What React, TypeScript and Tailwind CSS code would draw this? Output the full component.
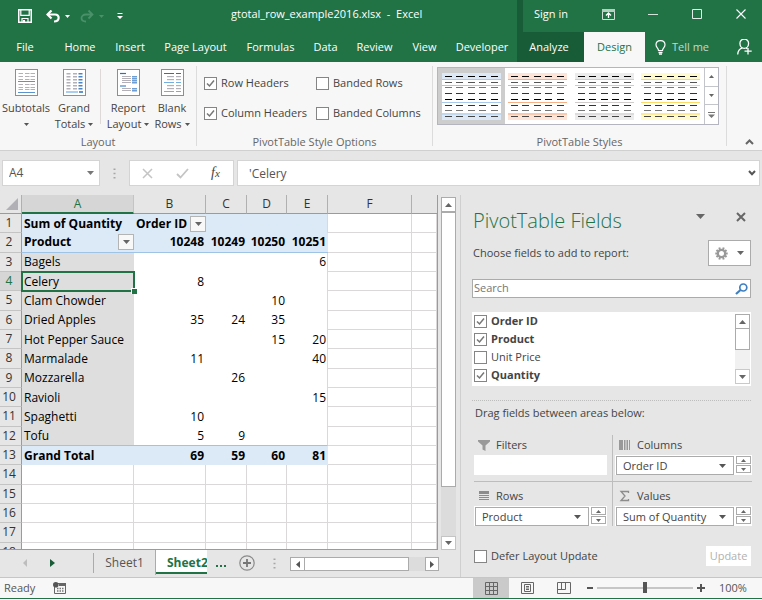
import React from "react";
import clsx from "clsx";

const UI = "font-['Open_Sans','Noto_Sans',sans-serif]";

function Caret({ className = "text-[#666]", up = false }: { className?: string; up?: boolean }) {
  return (
    <svg width="7" height="4" viewBox="0 0 7 4" className={clsx("pointer-events-none shrink-0", className)} aria-hidden="true">
      <path d={up ? "M0 4L3.500 0L7 4Z" : "M0 0H7L3.500 4Z"} fill="currentColor" />
    </svg>
  );
}

function Check({ label, checked = false, bold = false, className = "" }: { label: string; checked?: boolean; bold?: boolean; className?: string }) {
  return (
    <label className={clsx("flex items-center gap-[4px] whitespace-nowrap", bold && "font-bold", className)}>
      <span className="grid size-[13px] shrink-0">
        <input
          type="checkbox"
          defaultChecked={checked}
          className="peer col-start-1 row-start-1 size-[13px] appearance-none border border-[#858585] bg-white"
        />
        <svg viewBox="0 0 13 13" className="pointer-events-none invisible col-start-1 row-start-1 size-[13px] peer-checked:visible" aria-hidden="true">
          <path d="M3 6.500L5.500 9L10 3.500" fill="none" stroke="#777" strokeWidth="1.500" />
        </svg>
      </span>
      {label}
    </label>
  );
}

/* ---------- title bar ---------- */

function TitleBar() {
  return (
    <div className="flex h-[32px] shrink-0 items-center bg-[#217346] text-[11px] text-white">
      <div className="flex w-[231px] shrink-0 items-center pl-[18px]">
        <button aria-label="Save">
          <svg width="14" height="14" viewBox="0 0 14 14" className="block">
            <path d="M.750 .750H13.250V13.250H.750Z" fill="none" stroke="#fff" strokeWidth="1.500" />
            <path d="M2.800 1V6.300H11.200V1M4 13V9.500H10V13" fill="none" stroke="#fff" strokeWidth="1.200" />
            <path d="M5 11H7V13H5Z" fill="#fff" />
          </svg>
        </button>
        <button aria-label="Undo" className="ml-[14px]">
          <svg width="14" height="13" viewBox="0 0 14 13" className="block">
            <path d="M1.500 4.500H9C14 4.500 14 11.500 8 11.500" fill="none" stroke="#fff" strokeWidth="2.200" />
            <path d="M5.500 .5L1.500 4.500L5.500 8.500" fill="none" stroke="#fff" strokeWidth="2.200" />
          </svg>
        </button>
        <button aria-label="Undo history" className="ml-[5px]">
          <svg width="5" height="3" viewBox="0 0 5 3" className="block"><path d="M0 0H5L2.500 3Z" fill="#fff" /></svg>
        </button>
        <button aria-label="Redo" className="ml-[10px]">
          <svg width="14" height="13" viewBox="0 0 14 13" className="block">
            <path d="M12.500 4.500H6C0 4.500 0 11.500 6 11.500M8.500 .5L12.500 4.500L8.500 8.500" fill="none" stroke="#4a9069" strokeWidth="1.800" />
          </svg>
        </button>
        <button aria-label="Redo history" className="ml-[5px]">
          <svg width="5" height="3" viewBox="0 0 5 3" className="block"><path d="M0 0H5L2.500 3Z" fill="#4a9069" /></svg>
        </button>
        <button aria-label="Customize toolbar" className="ml-[13px]">
          <svg width="6" height="6" viewBox="0 0 6 6" className="block"><path d="M.5 0H5.500V1H.5ZM0 3H6L3 6Z" fill="#fff" /></svg>
        </button>
      </div>
      <h1 className="flex-1 truncate pb-[3px]">gtotal_row_example2016.xlsx&nbsp; -&nbsp; Excel</h1>
      <div className="h-full w-[6px] bg-[#185c37]" />
      <div className="flex h-full w-[239px] shrink-0 items-center pb-[4px] pl-[10px]">
        <button className="w-[36px] whitespace-nowrap">Sign in</button>
        <button aria-label="Ribbon display options" className="ml-[33px]">
          <svg width="13" height="11" viewBox="0 0 13 11" className="block">
            <path d="M.5 .5H12.500V10.500H.5Z" fill="none" stroke="#cfe0d6" />
            <path d="M0 0H13V3H0Z" fill="#b5cfc0" />
            <path d="M6.500 9V4.500M4 6.500L6.500 4L9 6.500" fill="none" stroke="#fff" strokeWidth="1.300" />
          </svg>
        </button>
        <button aria-label="Minimize" className="ml-[33px]">
          <svg width="10" height="10" viewBox="0 0 10 10" className="block"><path d="M0 5.500H10" stroke="#d3e3da" /></svg>
        </button>
        <button aria-label="Maximize" className="ml-[34px]">
          <svg width="10" height="10" viewBox="0 0 10 10" className="block"><path d="M.5 .5H9.500V9.500H.5Z" fill="none" stroke="#e3eee8" /></svg>
        </button>
        <button aria-label="Close" className="ml-[34px]">
          <svg width="10" height="10" viewBox="0 0 10 10" className="block"><path d="M.5 .5L9.500 9.500M9.500 .5L.5 9.500" stroke="#fff" strokeWidth="1.100" /></svg>
        </button>
      </div>
    </div>
  );
}

const TABS: [string, string][] = [
  ["File", "w-[54px] pr-[4px]"],
  ["Home", "w-[52px]"],
  ["Insert", "w-[48px]"],
  ["Page Layout", "w-[83px]"],
  ["Formulas", "w-[67px]"],
  ["Data", "w-[43px]"],
  ["Review", "w-[55px]"],
  ["View", "w-[45px]"],
  ["Developer", "w-[70px]"],
  ["Analyze", "w-[67px] bg-[#185c37] pr-[3px]"],
  ["Design", "w-[61px] bg-[#f7f7f7] text-[#217346]"],
];

function Tabs() {
  return (
    <nav className="flex h-[30px] shrink-0 bg-[#217346] text-[11px] text-white">
      {TABS.map(([name, cls]) => (
        <button key={name} className={clsx("shrink-0 whitespace-nowrap text-center", cls)}>{name}</button>
      ))}
      <button className="ml-[10px] flex items-center gap-[6px] whitespace-nowrap text-[#c3d9cd]">
        <svg width="11" height="15" viewBox="0 0 11 15" aria-hidden="true">
          <path d="M3.500 10.500C3.500 8 1 7.500 1 4.800C1 2.300 3 .7 5.500 .7S10 2.300 10 4.800C10 7.500 7.500 8 7.500 10.500Z" fill="none" stroke="#fff" strokeWidth="1.200" />
          <path d="M3.500 12.500H7.500M4 14.200H7" stroke="#fff" strokeWidth="1.300" />
        </svg>
        Tell me
      </button>
      <button aria-label="Share" className="ml-auto mr-[10px]">
        <svg width="15" height="16" viewBox="0 0 15 16" className="block">
          <path d="M11.500 5A4.300 4.300 0 1 0 3 5C3 7.500 5 9.300 7.200 9.300S11.500 7.500 11.500 5Z" fill="none" stroke="#fff" strokeWidth="1.300" />
          <path d="M.7 15.500C.9 12 2.500 9.500 5.500 8.800M9 9L10 9.800M11 9V15.500M7.500 12.200H14.700" fill="none" stroke="#fff" strokeWidth="1.300" />
        </svg>
      </button>
    </nav>
  );
}

/* ---------- ribbon ---------- */

function Sheet({ kind }: { kind: "sub" | "grand" | "report" | "blank" }) {
  const rows = [4, 7, 10, 15, 18, 20];
  const grandRows = [4, 7, 10, 13, 16, 19];
  const cols = [3.5, 10, 15.5];
  const gray = "#b4b0b8";
  return (
    <svg width="23" height="27" viewBox="0 0 23 27" className="block" aria-hidden="true">
      <rect x=".5" y=".5" width="22" height="26" fill="#fff" stroke="#968c86" />
      {kind === "sub" && (
        <>
          {rows.map((y) => cols.map((x) => <rect key={x + "-" + y} x={x} y={y} width="4.500" height="1" fill={gray} />))}
          <path d="M3 12.500H20M3 23.500H20" stroke="#5b93cc" />
        </>
      )}
      {kind === "grand" && (
        <>
          {grandRows.map((y) => cols.map((x, i) => <rect key={x + "-" + y} x={x} y={y} width="4" height="1.500" fill={i === 2 ? "#4a86c6" : gray} />))}
          <path d="M3 23H15" stroke="#73aee2" strokeWidth="1.200" />
          <path d="M16 23H20" stroke="#2e6fb8" strokeWidth="1.500" />
        </>
      )}
      {kind === "report" && (
        <>
          <path d="M3 4.500H9" stroke="#2e6fb8" strokeWidth="1.200" />
          <path d="M3 17H9" stroke="#8fb6df" strokeWidth="2" />
          {[7, 9, 11, 13, 19, 21].map((y) => (
            <g key={y}>
              <rect x="5" y={y} width="9" height="1" fill={gray} />
              <rect x="15" y={y} width="5" height="1.500" fill="#6d9dd2" />
            </g>
          ))}
        </>
      )}
      {kind === "blank" && (
        <>
          <path d="M3 4.500H13M15 4.500H20" stroke="#2e6fb8" strokeWidth="1.200" />
          {[7, 10, 16, 19].map((y) => (
            <g key={y}>
              <rect x="6" y={y} width="7" height="1.200" fill={gray} />
              <rect x="15" y={y} width="5" height="1.200" fill={gray} />
            </g>
          ))}
          <path d="M3 13.500H13M15 13.500H20M3 22.500H13M15 22.500H20" stroke="#73aee2" strokeWidth="1.200" />
        </>
      )}
    </svg>
  );
}

function RibbonButton({ kind, top, bottom, className }: { kind: "sub" | "grand" | "report" | "blank"; top: string; bottom?: string; className: string }) {
  return (
    <button className={clsx("flex shrink-0 flex-col items-center whitespace-nowrap leading-4", className)}>
      <Sheet kind={kind} />
      <span className="mt-[4px]">{top}</span>
      <span className="flex h-4 items-center gap-[3px]">
        {bottom}
        <svg width="5" height="3" viewBox="0 0 5 3" aria-hidden="true"><path d="M0 0H5L2.500 3Z" fill="#555" /></svg>
      </span>
    </button>
  );
}

function StyleThumb({ name, bg, line, selected = false }: { name: string; bg: string; line: string; selected?: boolean }) {
  const tones = ["#000", "#555", "#777", "#333", "#000", "#333", "#777", "#444"];
  return (
    <button aria-label={name} className={clsx("flex flex-1 items-center justify-center", selected && "bg-[#cdcdcd]")}>
      <svg width="59" height="47" viewBox="0 0 59 47" className="block">
        <rect width="59" height="47" fill="#fff" />
        <rect width="59" height="7" fill={bg} />
        <rect y="40" width="59" height="7" fill={bg} />
        <path d="M0 6.500H59M0 12.500H59M0 29.500H59M0 41H59" stroke={line} />
        {tones.map((tone, r) =>
          [3, 14, 26, 37, 49].map((x) => (
            <rect key={r + "-" + x} x={x} y={[3, 9, 14, 20, 26, 32, 37, 43][r]} width="7" height="1" fill={tone} />
          ))
        )}
      </svg>
    </button>
  );
}

function Group({ label, className, children }: { label: string; className?: string; children: React.ReactNode }) {
  return (
    <section className={clsx("my-1 flex shrink-0 flex-col border-r border-[#dcdcdc]", className)}>
      <div className="flex flex-1 items-start">{children}</div>
      <h2 className="h-[8px] text-center leading-[8px] text-[#666]">{label}</h2>
    </section>
  );
}

function Ribbon() {
  return (
    <div className="flex h-[89px] shrink-0 border-b border-[#d0d0d0] bg-[#f7f7f7] text-[11px] text-[#444]">
      <Group label="Layout" className="w-[197px]">
        <div className="flex pt-[3px]">
          <RibbonButton kind="sub" top="Subtotals" className="w-[52px]" />
          <RibbonButton kind="grand" top="Grand" bottom="Totals" className="w-[44px]" />
          <div className="mx-[4px] mb-[8px] w-px bg-[#dfd8d8]" />
          <RibbonButton kind="report" top="Report" bottom="Layout" className="w-[46px]" />
          <RibbonButton kind="blank" top="Blank" bottom="Rows" className="w-[42px]" />
        </div>
      </Group>
      <Group label="PivotTable Style Options" className="w-[236px]">
        <div className="grid h-[62px] grid-cols-[112px_auto] items-center pl-[7px] pt-[2px]">
          <Check label="Row Headers" checked />
          <Check label="Banded Rows" />
          <Check label="Column Headers" checked />
          <Check label="Banded Columns" />
        </div>
      </Group>
      <Group label="PivotTable Styles" className="w-[294px]">
        <div className="ml-[4px] mr-[7px] mt-px flex h-[58px] flex-1 border border-[#b5b5c0] bg-white">
          <StyleThumb name="Light blue style" bg="#dce8f5" line="#a9c9ea" selected />
          <StyleThumb name="Light orange style" bg="#fde4d6" line="#f6b088" />
          <StyleThumb name="Light gray style" bg="#ececec" line="#d0cccc" />
          <StyleThumb name="Light yellow style" bg="#fffbcc" line="#ffd966" />
          <div className="grid w-[14px] grid-rows-3 divide-y divide-[#c4c4cc] border-l border-[#c4c4cc]">
            <button aria-label="Previous styles" className="flex items-center justify-center">
              <svg width="5" height="3" viewBox="0 0 5 3"><path d="M0 3L2.500 0L5 3Z" fill="#666" /></svg>
            </button>
            <button aria-label="Next styles" className="flex items-center justify-center">
              <svg width="5" height="3" viewBox="0 0 5 3"><path d="M0 0H5L2.500 3Z" fill="#666" /></svg>
            </button>
            <button aria-label="All styles" className="flex items-center justify-center">
              <svg width="7" height="6" viewBox="0 0 7 6"><path d="M0 0H7V1H0ZM0 2.500H7L3.500 6Z" fill="#777" /></svg>
            </button>
          </div>
        </div>
      </Group>
      <button aria-label="Collapse ribbon" className="mb-[5px] ml-auto mr-[8px] self-end">
        <svg width="9" height="6" viewBox="0 0 9 6" className="block"><path d="M1 5L4.500 1.500L8 5" fill="none" stroke="#666" strokeWidth="2" /></svg>
      </button>
    </div>
  );
}

/* ---------- formula bar ---------- */

function Dots() {
  return (
    <svg width="3" height="11" viewBox="0 0 3 11" className="shrink-0" aria-hidden="true">
      <path d="M.5 .5H2.500V2H.5ZM.5 4.700H2.500V6.200H.5ZM.5 9H2.500V10.500H.5Z" fill="#a6a6a6" />
    </svg>
  );
}

function FormulaBar() {
  return (
    <div className="flex h-[44px] shrink-0 items-start bg-[#e6e6e6] px-[2px] pt-[9px] text-[12px] text-[#555]">
      <div className="grid w-[98px] shrink-0 items-center">
        <select aria-label="Name box" className="col-start-1 row-start-1 h-[26px] w-full appearance-none border border-[#d4d4d4] bg-white pl-[6px]">
          <option>A4</option>
        </select>
        <Caret className="col-start-1 row-start-1 mr-[6px] justify-self-end text-[#777]" />
      </div>
      <div className="flex h-[26px] w-[29px] shrink-0 items-center justify-center"><Dots /></div>
      <div className="flex h-[26px] w-[105px] shrink-0 items-center border border-[#d4d4d4] bg-white">
        <button aria-label="Cancel" className="ml-[12px]">
          <svg width="11" height="11" viewBox="0 0 11 11" className="block"><path d="M1 1L10 10M10 1L1 10" stroke="#c4c4c4" strokeWidth="1.500" /></svg>
        </button>
        <button aria-label="Enter" className="ml-[23px]">
          <svg width="13" height="11" viewBox="0 0 13 11" className="block"><path d="M1 6L4.500 9.500L12 1" fill="none" stroke="#c4c4c4" strokeWidth="1.800" /></svg>
        </button>
        <button aria-label="Insert function" className="ml-[22px] flex items-baseline font-['Liberation_Serif',serif] text-[14px] italic leading-none text-[#444]">
          f<span className="text-[11px]">x</span>
        </button>
      </div>
      <div className="ml-[3px] flex h-[26px] min-w-0 flex-1 items-center border border-[#d4d4d4] bg-white pr-[3px]">
        <input aria-label="Formula" defaultValue="'Celery" className="h-full min-w-0 flex-1 bg-transparent pl-[11px] text-[12px] outline-none" />
        <button aria-label="Expand formula bar">
          <svg width="8" height="6" viewBox="0 0 8 6" className="block"><path d="M1 1L4 4.200L7 1" fill="none" stroke="#555" strokeWidth="2" /></svg>
        </button>
      </div>
    </div>
  );
}

/* ---------- worksheet ---------- */

const DATA: [string, string, string, string, string][] = [
  ["Bagels", "", "", "", "6"],
  ["Celery", "8", "", "", ""],
  ["Clam Chowder", "", "", "10", ""],
  ["Dried Apples", "35", "24", "35", ""],
  ["Hot Pepper Sauce", "", "", "15", "20"],
  ["Marmalade", "11", "", "", "40"],
  ["Mozzarella", "", "26", "", ""],
  ["Ravioli", "", "", "", "15"],
  ["Spaghetti", "10", "", "", ""],
  ["Tofu", "5", "9", "", ""],
];

function RowHead({ n, active = false }: { n: number; active?: boolean }) {
  return (
    <th
      scope="row"
      className={clsx(
        "border-b border-r border-b-[#c4c4c4] border-r-[#9b9b9b] pr-[3px] text-center font-normal",
        active ? "bg-[#d6d6d6] text-[#217346]" : "bg-[#e6e6e6] text-[#333]"
      )}
    >
      {n}
    </th>
  );
}

function FilterButton({ label }: { label: string }) {
  return (
    <button aria-label={label} className="flex size-4 shrink-0 items-center justify-center border border-[#b4b4b4] bg-[#f8f8f8]">
      <Caret />
    </button>
  );
}

const LINE = "border-b border-r border-[#dad8d9]";

function Grid() {
  const head = "border-b border-r border-b-[#9b9b9b] border-r-[#b0b0b0] font-normal text-[#333]";
  return (
    <table className="h-[367px] w-full table-fixed border-separate border-spacing-0 whitespace-nowrap bg-white text-[12px] leading-[16px] text-black">
      <colgroup>
        <col className="w-[22px]" />
        <col className="w-[112px]" />
        <col className="w-[72px]" />
        <col className="w-[41px]" />
        <col className="w-[40px]" />
        <col className="w-[41px]" />
        <col className="w-[84px]" />
        <col />
      </colgroup>
      <thead>
        <tr className="h-[19px] bg-[#e6e6e6]">
          <th className={head} aria-label="Select all">
            <svg width="12" height="12" viewBox="0 0 12 12" className="ml-auto mr-[3px] block"><path d="M12 0V12H0Z" fill="#b1b1b5" /></svg>
          </th>
          <th className="border-b-2 border-r border-b-[#217346] border-r-[#c4c4c4] bg-[#d6d6d6] font-normal text-[#217346]">A</th>
          {["B", "C", "D", "E", "F"].map((c) => (
            <th key={c} className={head}>{c}</th>
          ))}
          <th className="border-b border-[#9b9b9b]" />
        </tr>
      </thead>
      <tbody>
        <tr className="h-[19px]">
          <RowHead n={1} />
          <td className="bg-[#dce9f6] pl-[2px] font-bold">Sum of Quantity</td>
          <td className="bg-[#dce9f6] font-bold">
            <div className="flex items-center justify-between pl-[2px]">Order ID<FilterButton label="Filter Order ID" /></div>
          </td>
          <td colSpan={3} className="border-r border-r-[#dad8d9] bg-[#dce9f6]" />
          <td className={LINE} />
          <td className={LINE} />
        </tr>
        <tr className="h-[19px]">
          <RowHead n={2} />
          <td className="border-b border-[#9dc3e6] bg-[#dce9f6] font-bold">
            <div className="flex items-center justify-between pl-[2px]">Product<FilterButton label="Filter Product" /></div>
          </td>
          {["10248", "10249", "10250", "10251"].map((v) => (
            <td key={v} className="border-b border-[#9dc3e6] bg-[#dce9f6] pr-[2px] text-right font-bold">{v}</td>
          ))}
          <td className={LINE} />
          <td className={LINE} />
        </tr>
        {DATA.map((row, r) => (
          <tr key={row[0]} className="h-[19px]">
            <RowHead n={r + 3} active={r === 1} />
            <td className={clsx("relative bg-[#dedede] pl-[2px]", r === 1 && "z-10", r === 9 && "border-b border-[#9dc3e6]")}>
              {row[0]}
              {r === 1 && (
                <span className="pointer-events-none absolute -inset-px border-2 border-[#217346]">
                  <span className="absolute -bottom-[4px] -right-[4px] size-[6px] border-l border-t border-white bg-[#217346]" />
                </span>
              )}
            </td>
            {row.slice(1).map((v, c) => (
              <td key={c} className={clsx("text-right", c === 3 ? "border-r border-r-[#dad8d9] pr-px" : "pr-[2px]", r === 9 && "border-b border-b-[#9dc3e6]")}>{v}</td>
            ))}
            <td className={LINE} />
            <td className={LINE} />
          </tr>
        ))}
        <tr className="h-[19px] font-bold">
          <RowHead n={13} />
          <td className="bg-[#dce9f6] pl-[2px]">Grand Total</td>
          {["69", "59", "60", "81"].map((v) => (
            <td key={v} className="bg-[#dce9f6] pr-[2px] text-right">{v}</td>
          ))}
          <td className={LINE} />
          <td className={LINE} />
        </tr>
        {[14, 15, 16, 17, 18].map((n) => (
          <tr key={n} className="h-[19px]">
            <RowHead n={n} />
            {[0, 1, 2, 3, 4, 5, 6].map((c) => (
              <td key={c} className={LINE} />
            ))}
          </tr>
        ))}
      </tbody>
    </table>
  );
}

function VerticalScroll() {
  return (
    <div className="mr-[4px] mt-[2px] flex w-[15px] shrink-0 flex-col bg-[#dcdcdc]">
      <button aria-label="Scroll up" className="flex h-[15px] items-center justify-center border border-[#ababab] bg-white"><Caret up /></button>
      <div className="mb-[49px] flex-1 border border-[#ababab] bg-white" />
      <button aria-label="Scroll down" className="flex h-[14px] items-center justify-center border border-[#c4c4c4] bg-white"><Caret /></button>
    </div>
  );
}

function SheetTabs() {
  return (
    <div className="flex h-[27px] shrink-0 items-start bg-[#e6e6e6] text-[12px] text-[#555]">
      <button aria-label="Previous sheet" className="ml-[23px] mt-[9px]">
        <svg width="4" height="8" viewBox="0 0 4 8" className="block"><path d="M4 0V8L0 4Z" fill="#bdbdbd" /></svg>
      </button>
      <button aria-label="Next sheet" className="ml-[23px] mt-[9px]">
        <svg width="5" height="8" viewBox="0 0 5 8" className="block"><path d="M0 0V8L5 4Z" fill="#185c37" /></svg>
      </button>
      <div className="ml-[38px] mt-[3px] h-[20px] w-px bg-[#ababab]" />
      <button className="h-[25px] w-[62px] border-r border-[#ababab] text-center">Sheet1</button>
      <button className="h-[24px] w-[51px] overflow-hidden border-b-2 border-[#217346] bg-white pl-[11px] pt-[3px] text-left font-bold text-[#217346]">Sheet2</button>
      <button aria-label="More sheets" className="ml-[9px] mt-[15px]">
        <svg width="11" height="2" viewBox="0 0 11 2" className="block"><path d="M0 0H2V2H0ZM4 0H6V2H4ZM8 0H10V2H8Z" fill="#217346" /></svg>
      </button>
      <button aria-label="New sheet" className="ml-[12px] mt-[5px]">
        <svg width="16" height="16" viewBox="0 0 16 16" className="block">
          <circle cx="8" cy="8" r="7.200" fill="none" stroke="#8a8a8a" strokeWidth="1.200" />
          <path d="M8 4V12M4 8H12" stroke="#777" strokeWidth="1.800" />
        </svg>
      </button>
      <div className="ml-[18px] mt-[8px]"><Dots /></div>
      <div className="ml-[14px] mr-[21px] mt-[7px] flex h-[14px] min-w-0 flex-1 bg-[#dcdcdc]">
        <button aria-label="Scroll left" className="flex w-[15px] items-center justify-center border border-[#ababab] bg-white">
          <svg width="4" height="7" viewBox="0 0 4 7"><path d="M4 0V7L0 3.500Z" fill="#555" /></svg>
        </button>
        <div className="mr-[16px] flex-1 border border-l-0 border-[#ababab] bg-white" />
        <button aria-label="Scroll right" className="flex w-[14px] items-center justify-center border border-[#ababab] bg-white">
          <svg width="4" height="7" viewBox="0 0 4 7"><path d="M0 0V7L4 3.500Z" fill="#555" /></svg>
        </button>
      </div>
    </div>
  );
}

/* ---------- field pane ---------- */

function AreaHead({ icon, label }: { icon: React.ReactNode; label: string }) {
  return (
    <h3 className="flex h-[20px] items-center gap-[6px] pl-[4px]">
      <svg width="12" height="12" viewBox="0 0 12 12" aria-hidden="true">{icon}</svg>
      {label}
    </h3>
  );
}

function AreaField({ area, value }: { area: string; value: string }) {
  const step = "flex h-[8px] items-center justify-center border border-[#ababab] bg-white";
  return (
    <div className="flex h-[20px] items-start bg-white px-px pt-px">
      <div className="grid min-w-0 flex-1 items-center">
        <select aria-label={area} className="col-start-1 row-start-1 h-[19px] w-full appearance-none border border-[#ababab] bg-white pl-[6px] text-[11px] leading-[16px]">
          <option>{value}</option>
        </select>
        <Caret className="col-start-1 row-start-1 mr-[8px] justify-self-end text-[#555]" />
      </div>
      <div className="ml-[2px] grid w-[15px] gap-px">
        <button aria-label={"Move " + value + " up"} className={step}>
          <svg width="5" height="3" viewBox="0 0 5 3"><path d="M0 3L2.500 0L5 3Z" fill="#666" /></svg>
        </button>
        <button aria-label={"Move " + value + " down"} className={step}>
          <svg width="5" height="3" viewBox="0 0 5 3"><path d="M0 0H5L2.500 3Z" fill="#666" /></svg>
        </button>
      </div>
    </div>
  );
}

function FieldPane() {
  return (
    <aside className="flex w-[302px] shrink-0 flex-col border-l border-[#cfcfcf] bg-[#e6e6e6] pl-[11px] pr-[11px] text-[11px] text-[#444]">
      <div className="flex h-[45px] items-center pr-[5px] pt-[6px]">
        <h2 className="flex-1 pl-px text-[20px] font-light text-[#217346]">PivotTable Fields</h2>
        <button aria-label="Pane options" className="mb-[8px]">
          <svg width="9" height="5" viewBox="0 0 9 5" className="block"><path d="M0 0H9L4.500 5Z" fill="#666" /></svg>
        </button>
        <button aria-label="Close pane" className="mb-[8px] ml-[31px]">
          <svg width="10" height="10" viewBox="0 0 10 10" className="block"><path d="M1 1L9 9M9 1L1 9" stroke="#666" strokeWidth="2" /></svg>
        </button>
      </div>
      <div className="flex h-[26px] items-center justify-between">
        <p className="pl-px">Choose fields to add to report:</p>
        <button aria-label="Tools" className="flex h-[26px] w-[43px] items-center justify-center gap-[9px] border border-[#ababab] bg-white">
          <svg width="13" height="13" viewBox="0 0 13 13">
            <circle cx="6.500" cy="6.500" r="3.600" fill="none" stroke="#999" strokeWidth="2.200" />
            <path d="M4.300 .5L5 3M8.700 .5L8 3M4.300 12.500L5 10M8.700 12.500L8 10M.3 6.500H2.500M10.500 6.500H12.700M1.500 3L3 4.500M11.500 3L10 4.500M1.500 10L3 8.500M11.500 10L10 8.500" stroke="#999" strokeWidth="2" />
          </svg>
          <Caret />
        </button>
      </div>
      <div className="mt-[13px] flex h-[19px] items-center border border-[#ababab] bg-white pr-[2px]">
        <input aria-label="Search fields" placeholder="Search" className="h-full min-w-0 flex-1 pb-[2px] pl-px outline-none placeholder:text-[#767676]" />
        <svg width="13" height="12" viewBox="0 0 13 12" aria-hidden="true">
          <circle cx="8.300" cy="4.500" r="3.500" fill="none" stroke="#3f7fc1" strokeWidth="1.700" />
          <path d="M5.500 7L1 11" stroke="#3f7fc1" strokeWidth="2.200" />
        </svg>
      </div>
      <div className="mt-[14px] flex h-[74px] shrink-0 justify-between bg-white pl-[2px]">
        <div className="grid auto-rows-[18px]">
          <Check label="Order ID" checked bold />
          <Check label="Product" checked bold />
          <Check label="Unit Price" />
          <Check label="Quantity" checked bold />
        </div>
        <div className="my-[2px] mr-px flex w-[15px] flex-col bg-[#f1f1f1]">
          <button aria-label="Scroll fields up" className="flex h-[15px] items-center justify-center border border-[#ababab] bg-white"><Caret up /></button>
          <div className="mb-auto h-[21px] border border-t-0 border-[#ababab] bg-white" />
          <button aria-label="Scroll fields down" className="flex h-[15px] items-center justify-center border border-[#c9c9c9] bg-white"><Caret /></button>
        </div>
      </div>
      <p className="mt-[14px] border-t border-dotted border-[#bdbdbd] pl-[3px] pt-[4px] leading-[16px]">Drag fields between areas below:</p>
      <div className="-mr-px ml-[2px] mt-[14px] grid grid-cols-2">
        <div className="border-b border-r border-[#bdbdbd] pb-[6px] pr-[5px]">
          <AreaHead label="Filters" icon={<path d="M0 1H12V2.500L7.500 6.500V12L4.500 10.500V6.500L0 2.500Z" fill="#999" />} />
          <div className="h-[20px] bg-white" />
        </div>
        <div className="border-b border-[#bdbdbd] pb-[6px] pl-[2px]">
          <AreaHead label="Columns" icon={<path d="M0 1H4V11H0ZM5 1H6.500V11H5ZM7.500 1H9V11H7.500ZM10 1H11V11H10Z" fill="#999" />} />
          <AreaField area="Columns" value="Order ID" />
        </div>
        <div className="border-r border-[#bdbdbd] pr-[5px] pt-[4px]">
          <AreaHead label="Rows" icon={<path d="M1 1H11V4H1ZM1 5H11V6H1ZM1 7H11V8H1ZM1 9H11V10H1Z" fill="#8c8c8c" />} />
          <AreaField area="Rows" value="Product" />
        </div>
        <div className="pl-[2px] pt-[4px]">
          <AreaHead label="Values" icon={<path d="M9.500 3V1.500H2L6 6L2 10.500H9.500V9" fill="none" stroke="#8c8c8c" strokeWidth="1.300" />} />
          <AreaField area="Values" value="Sum of Quantity" />
        </div>
      </div>
      <div className="mt-[20px] flex items-center justify-between pl-[2px]">
        <Check label="Defer Layout Update" />
        <button disabled className="h-[20px] w-[45px] bg-white text-center text-[#b1b1b1]">Update</button>
      </div>
    </aside>
  );
}

/* ---------- status bar ---------- */

function StatusBar() {
  return (
    <footer className="flex h-[22px] shrink-0 items-center border-b border-t border-b-[#217346] border-t-[#c6c6c6] bg-[#f7f7f7] text-[11px] text-[#555]">
      <span className="ml-[4px] w-[49px]">Ready</span>
      <button aria-label="Record macro">
        <svg width="13" height="12" viewBox="0 0 13 12" className="block">
          <path d="M4 1.500H12.500V11.500H1.500V5" fill="none" stroke="#666" />
          <path d="M6 1H13V4H6Z" fill="#666" />
          <circle cx="2.800" cy="2.800" r="2.800" fill="#555" />
          <path d="M4 6.500H11M4 9H11" stroke="#777" strokeDasharray="1.500 1" strokeWidth="1.300" />
        </svg>
      </button>
      <button aria-label="Normal view" className="ml-auto flex h-full w-[36px] items-center justify-center bg-[#cacaca]">
        <svg width="13" height="13" viewBox="0 0 13 13"><path d="M.5 .5H12.500V12.500H.5ZM4.500 0V13M8.500 0V13M0 4.500H13M0 8.500H13" fill="none" stroke="#666" /></svg>
      </button>
      <button aria-label="Page layout view" className="ml-[12px]">
        <svg width="13" height="12" viewBox="0 0 13 12" className="block"><path d="M.5 .5H12.500V11.500H.5ZM3.500 2.500H9.500V9.500H3.500ZM5 4.500H8M5 6H8M5 7.500H8" fill="none" stroke="#666" /></svg>
      </button>
      <button aria-label="Page break preview" className="ml-[23px]">
        <svg width="14" height="12" viewBox="0 0 14 12" className="block"><path d="M.5 .5H13.500V11.500H.5ZM.5 7.500H8.500V.5M4.500 .5V7.500" fill="none" stroke="#666" /></svg>
      </button>
      <button aria-label="Zoom out" className="ml-[16px]">
        <svg width="6" height="2" viewBox="0 0 6 2" className="block"><path d="M0 0H6V2H0Z" fill="#555" /></svg>
      </button>
      <input
        type="range"
        aria-label="Zoom"
        min={0}
        max={100}
        defaultValue={50}
        className="ml-[4px] h-[12px] w-[96px] appearance-none bg-transparent [&::-webkit-slider-runnable-track]:h-[2px] [&::-webkit-slider-runnable-track]:bg-[#c6c6c6] [&::-webkit-slider-thumb]:-mt-[5px] [&::-webkit-slider-thumb]:h-[11px] [&::-webkit-slider-thumb]:w-[4px] [&::-webkit-slider-thumb]:appearance-none [&::-webkit-slider-thumb]:bg-[#555]"
      />
      <button aria-label="Zoom in" className="ml-[4px]">
        <svg width="8" height="8" viewBox="0 0 8 8" className="block"><path d="M0 4H8M4 0V8" stroke="#555" strokeWidth="2" /></svg>
      </button>
      <span className="ml-[14px] w-[43px]">100%</span>
    </footer>
  );
}

export default function App() {
  return (
    <div className={clsx("flex h-screen min-h-[600px] min-w-[762px] flex-col overflow-hidden bg-white pb-px", UI)}>
      <TitleBar />
      <Tabs />
      <Ribbon />
      <FormulaBar />
      <main className="flex min-h-0 flex-1 bg-[#e6e6e6]">
        <div className="flex min-w-0 flex-1 flex-col">
          <div className="flex min-h-0 flex-1">
            <div className="mr-[3px] min-w-0 flex-1 overflow-hidden border-b border-r border-[#9b9b9b] bg-white">
              <Grid />
            </div>
            <VerticalScroll />
          </div>
          <SheetTabs />
        </div>
        <FieldPane />
      </main>
      <StatusBar />
    </div>
  );
}
